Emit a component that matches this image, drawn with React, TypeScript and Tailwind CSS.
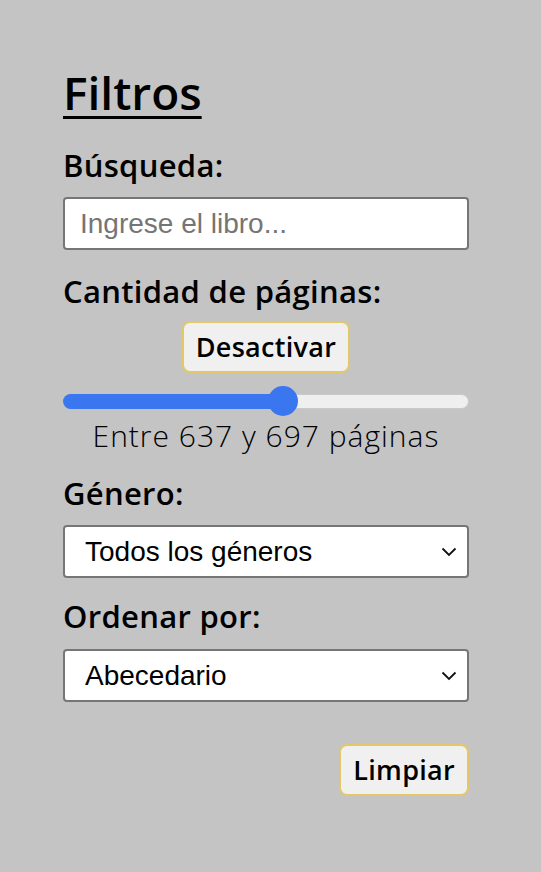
const sans = { fontFamily: "'Open Sans', Lato, sans-serif" };
const arial = { fontFamily: "'Liberation Sans', Arial, sans-serif" };

function Select({ value }: { value: string }) {
  return (
    <div className="relative h-[53px] w-full rounded-[4px] border-2 border-[#767676] bg-white">
      <div className="flex h-full items-center pl-[20px] text-[28px] text-black" style={arial}>
        {value}
      </div>
      <svg className="absolute right-[10px] top-[20px]" width="16" height="10" viewBox="0 0 16 10" fill="none">
        <polyline points="1.5,1.5 8,8 14.5,1.5" stroke="#111" strokeWidth="1.8" />
      </svg>
    </div>
  );
}

export default function App() {
  return (
    <div className="min-h-screen bg-[#c4c4c4] pb-10 text-black" style={sans}>
      <div className="ml-[63px] w-[406px] pt-[64px]">
        <h1 className="text-[46px] font-semibold leading-[56px] underline decoration-[3px] underline-offset-[6px]">Filtros</h1>

        <p className="mt-[26px] text-[31px] font-semibold leading-[38px] tracking-[0.3px]">Búsqueda:</p>
        <div className="mt-[13px] flex h-[53px] items-center rounded-[4px] border-2 border-[#767676] bg-white pl-[15px] text-[28px] text-[#757575]" style={arial}>
          Ingrese el libro...
        </div>

        <p className="mt-[22px] text-[31px] font-semibold leading-[38px] tracking-[0.3px]">Cantidad de páginas:</p>
        <div className="mt-[11px] flex justify-center">
          <button className="h-[52px] rounded-[8px] border-2 border-[#e3c86a] bg-[#f0f0f0] px-[12px] text-[27px] font-semibold tracking-[0.3px]">Desactivar</button>
        </div>

        <div className="relative mt-[13px] h-[30px]">
          <div className="absolute left-0 right-0 top-[8px] h-[15px] rounded-full border border-[#c9c9c9] bg-[#efefef]" />
          <div className="absolute left-0 top-[8px] h-[15px] w-[220px] rounded-full bg-[#3a76f0]" />
          <div className="absolute left-[205px] top-0 h-[30px] w-[30px] rounded-full bg-[#3a76f0]" />
        </div>

        <p className="mt-[2px] text-center text-[30px] font-light leading-[36px] tracking-[1px]">Entre 637 y 697 páginas</p>

        <p className="mt-[20px] text-[31px] font-semibold leading-[38px] tracking-[0.3px]">Género:</p>
        <div className="mt-[13px]">
          <Select value="Todos los géneros" />
        </div>

        <p className="mt-[19px] text-[31px] font-semibold leading-[38px] tracking-[0.3px]">Ordenar por:</p>
        <div className="mt-[14px]">
          <Select value="Abecedario" />
        </div>

        <div className="mt-[42px] flex justify-end">
          <button className="h-[52px] rounded-[8px] border-2 border-[#e3c86a] bg-[#f0f0f0] px-[12px] text-[27px] font-semibold tracking-[0.3px]">Limpiar</button>
        </div>
      </div>
    </div>
  );
}
